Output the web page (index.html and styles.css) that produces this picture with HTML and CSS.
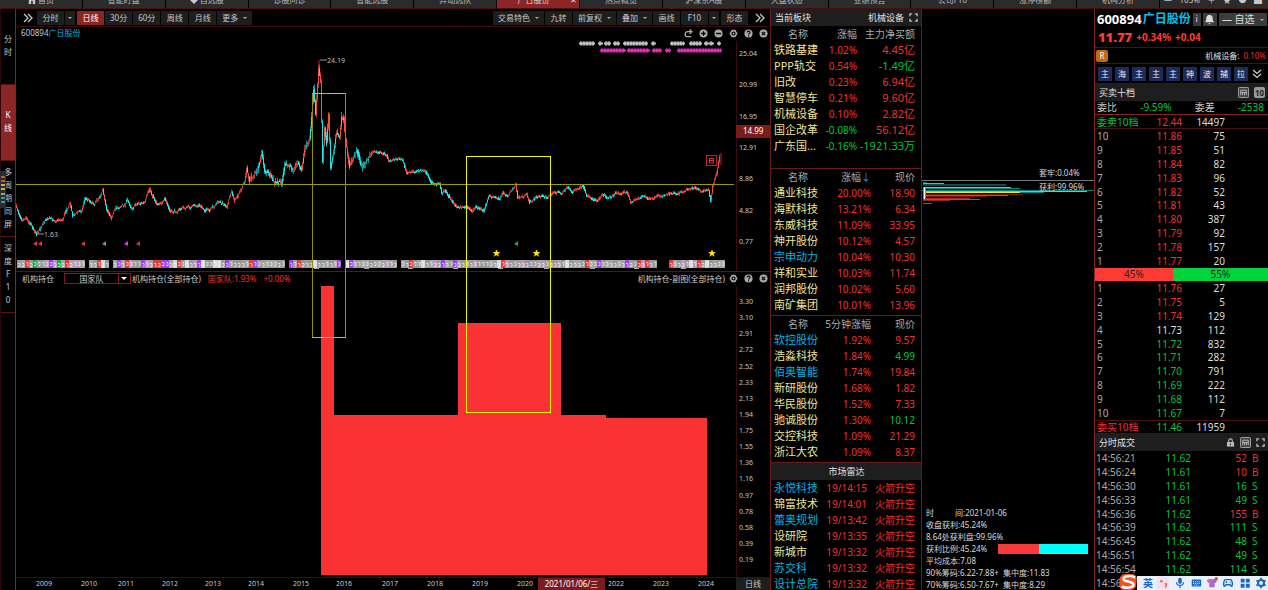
FILE: index.html
```html
<!DOCTYPE html>
<html lang="zh-CN">
  <head>
    <meta charset="UTF-8" />
    <meta name="viewport" content="width=device-width, initial-scale=1.0" />
    <title>广日股份 600894</title>
    <link rel="stylesheet" href="styles.css">
  </head>
  <body>
    <!-- shared icons -->
    <svg class="sprite" aria-hidden="true">
      <symbol id="i-more" viewBox="0 0 10 10"><path d="M1 1l4 4-4 4M5 1l4 4-4 4" fill="none" stroke="currentColor" stroke-width="1.3" /></symbol>
      <symbol id="i-redo" viewBox="0 0 10 10"><path d="M8 3H4a2.8 2.8 0 0 0 0 5.6h4M6.2.6L8.800 3 6.200 5.400" fill="none" stroke="currentColor" stroke-width="1.400" /></symbol>
      <symbol id="i-plus" viewBox="0 0 10 10"><circle cx="5" cy="5" r="4.500" fill="currentColor" /><path d="M5 2.500v5M2.500 5h5" stroke="#000" stroke-width="1.400" /></symbol>
      <symbol id="i-minus" viewBox="0 0 10 10"><circle cx="5" cy="5" r="4.500" fill="currentColor" /><path d="M2.200 5h5.600" stroke="#000" stroke-width="1.600" /></symbol>
      <symbol id="i-gear" viewBox="0 0 10 10"><path d="M3 .8h4L9.500 5 7 9.200H3L.5 5z" fill="currentColor" /><circle cx="5" cy="5" r="2.300" fill="#000" /><circle cx="5" cy="5" r="1" fill="currentColor" /></symbol>
      <symbol id="i-help" viewBox="0 0 10 10"><circle cx="5" cy="5" r="4.500" fill="currentColor" /><path d="M3.400 3.900c0-2 3.300-2 3.300 0C6.700 5 5 4.900 5 6.100M5 7v1.200" fill="none" stroke="#000" stroke-width="1.200" /></symbol>
      <symbol id="i-close" viewBox="0 0 10 10"><circle cx="5" cy="5" r="4.500" fill="currentColor" /><path d="M3.200 3.200l3.600 3.600M6.800 3.200L3.200 6.800" stroke="#000" stroke-width="1.300" /></symbol>
      <symbol id="i-full" viewBox="0 0 10 10"><path d="M1 3.500V1h2.500M6.500 1H9v2.500M9 6.500V9H6.500M3.500 9H1V6.500" fill="none" stroke="currentColor" stroke-width="1.500" /></symbol>
      <symbol id="i-page" viewBox="0 0 12 12"><rect x=".5" y=".5" width="11" height="11" rx="1" fill="#444" stroke="#aaa" /><path d="M3 9V3.500h6V9M3 6h6M5 9V6M7 9V6" fill="none" stroke="#bbb" /></symbol>
      <symbol id="i-lock" viewBox="0 0 10 10"><path d="M3 5V3a2 2 0 0 1 4 0v2" fill="none" stroke="currentColor" stroke-width="1.300" /><rect x="1" y="4.500" width="8" height="5" fill="currentColor" /><path d="M5 6v2" stroke="#222" /></symbol>
    </svg>

    <nav class="tabs">
      <a href="#"><svg viewBox="0 0 10 10"><path d="M0 5l5-5 5 5H9v5H6V6H4v4H1V5z" fill="#ccc" /></svg> 首页</a>
      <a href="#">智能盯盘</a>
      <a href="#"><svg viewBox="0 0 10 10"><path d="M5 10L0 5a3 3 0 0 1 5-4 3 3 0 0 1 5 4z" fill="#ccc" /></svg> 自选股</a>
      <a href="#">诊股问诊</a>
      <a href="#">智能选股</a>
      <a href="#">异动选队</a>
      <a href="#" class="active">广日股份<i>✕</i></a>
      <a href="#">热点概览</a>
      <a href="#">沪深京A股</a>
      <a href="#">大盘状态</a>
      <a href="#">业绩预告</a>
      <a href="#">公司F10</a>
      <a href="#">涨停榜额</a>
      <a href="#">机构分析</a>
      <div class="tab-tools"><span>—</span><span>105%</span><span>＋</span><span>★</span><span>●</span><span>▟</span></div>
    </nav>

    <div class="app">
      <aside class="side">
        <button>分<br>时</button>
        <button class="active">K<br>线</button>
        <button>多<br>周<br>期<br>同<br>屏</button>
        <button>深<br>度<br>F<br>1<br>0</button>
        <div class="meter"><i></i><i></i><i></i><i></i><i></i><i></i><i></i></div>
      </aside>

      <main class="chart">
        <div class="toolbar">
          <button class="icon-btn"><svg><use href="#i-more" /></svg></button>
          <div class="group">
            <button>分时</button><button class="drop"></button>
          </div>
          <button class="active">日线</button>
          <button>30分</button>
          <button>60分</button>
          <button>周线</button>
          <button>月线</button>
          <button class="with-drop">更多</button>
          <div class="spacer"></div>
          <button class="with-drop">交易特色</button>
          <button>九转</button>
          <button class="with-drop">前复权</button>
          <button class="with-drop">叠加</button>
          <button>画线</button>
          <div class="group">
            <button>F10</button><button class="drop"></button>
          </div>
          <button>形态</button>
          <button class="icon-btn"><svg><use href="#i-more" /></svg></button>
        </div>

        <div class="chart-head">
          <span>600894<b>广日股份</b></span>
          <div class="icons">
            <svg><use href="#i-redo" /></svg>
            <svg><use href="#i-plus" /></svg>
            <svg><use href="#i-minus" /></svg>
            <svg><use href="#i-gear" /></svg>
            <svg><use href="#i-help" /></svg>
            <svg><use href="#i-close" /></svg>
          </div>
        </div>

        <div class="chart-body">
          <div class="pane price">
            <svg id="price" viewBox="16 41 720 230" preserveAspectRatio="none"></svg>
            <div class="axis">
              <span>25.04</span><span>20.99</span><span>16.95</span><span>12.91</span><span>8.86</span><span>4.82</span><span>0.77</span>
              <b class="axis-tag">14.99</b>
            </div>
          </div>
          <div class="sub-head">
            <label for="holder">机构持仓</label>
            <div class="picker">
              <select id="holder"><option>国家队</option></select>
            </div>
            <span>机构持仓(全部持仓)</span>
            <span class="up">国家队:1.93%</span>
            <span class="up">+0.00%</span>
            <span class="sub-name">机构持仓-副图(全部持仓)</span>
            <div class="icons">
              <svg><use href="#i-gear" /></svg>
              <svg><use href="#i-help" /></svg>
              <svg><use href="#i-close" /></svg>
            </div>
          </div>
          <div class="pane holding">
            <svg viewBox="16 286 720 291" preserveAspectRatio="none">
              <path d="M321 575V286h13v129h124v-92h103v92h45v3h101v157z" fill="#f93333" />
            </svg>
            <div class="axis">
              <span>3.30</span><span>3.10</span><span>2.91</span><span>2.72</span><span>2.52</span><span>2.33</span><span>2.13</span><span>1.94</span><span>1.75</span><span>1.55</span><span>1.36</span><span>1.16</span><span>0.97</span><span>0.78</span><span>0.58</span><span>0.39</span><span>0.19</span>
            </div>
          </div>
          <svg class="drawings" viewBox="16 41 720 536" preserveAspectRatio="none">
            <path d="M16 184.500H734" stroke="#9a9a00" />
            <path d="M312.500 337.500V93.500h33V337.500z" fill="none" stroke="#8f8f00" />
            <path d="M312 93.500h34M312 337.500h34" stroke="#c8c800" />
            <rect x="466.500" y="156.500" width="84" height="256" fill="none" stroke="#f5f500" />
          </svg>
        </div>

        <div class="time-axis">
          <span>2009</span><span>2010</span><span>2011</span><span>2012</span><span>2013</span><span>2014</span><span>2015</span><span>2016</span><span>2017</span><span>2018</span><span>2019</span><span>2020</span><b>2021/01/06/三</b><span>2022</span><span>2023</span><span>2024</span>
          <button>日线</button>
        </div>
      </main>

      <section class="boards">
        <div class="bar"><span>当前板块</span><span class="right">机械设备</span><svg><use href="#i-full" /></svg></div>
        <table class="list list-board">
          <thead><tr><th>名称</th><th>涨幅</th><th>主力净买额</th></tr></thead>
          <tbody id="board"></tbody>
        </table>
        <table class="list">
          <thead><tr><th>名称</th><th>涨幅<i>↓</i></th><th>现价</th></tr></thead>
          <tbody id="gainers"></tbody>
        </table>
        <table class="list">
          <thead><tr><th>名称</th><th>5分钟涨幅</th><th>现价</th></tr></thead>
          <tbody id="movers"></tbody>
        </table>
        <div class="bar radar-title">市场雷达</div>
        <table class="list radar">
          <tbody id="radar"></tbody>
        </table>
      </section>

      <section class="chips">
        <svg class="chip-plot" viewBox="922 9 172 220" preserveAspectRatio="none" id="chips">
          <path d="M922 180.500H1094" stroke="#77777f" />
          <path d="M922 190.500H1094" stroke="#00807c" />
        </svg>
        <div class="chip-labels"><span>套牢:0.04%</span><span>获利:99.96%</span></div>
        <div class="chip-info">
          <p><span class="gap">时</span>间:2021-01-06</p>
          <p>收盘获利:45.24%</p>
          <p>8.64处获利盘:99.96%</p>
          <p class="ratio">获利比例:45.24%<i></i></p>
          <p>平均成本:7.08</p>
          <p>90%筹码:6.22-7.88+&nbsp; 集中度:11.83</p>
          <p>70%筹码:6.50-7.67+&nbsp; 集中度:8.29</p>
        </div>
      </section>

      <section class="quote">
        <div class="stock">
          <b>600894</b><b class="name">广日股份</b>
          <button class="info">i</button>
          <button class="bell"><svg viewBox="0 0 12 12"><path d="M6 1c-3 0-3.500 2-3.500 4S2 8 .8 9h10.400C10 8 9.500 7 9.500 5S9 1 6 1zM4.500 10h3L6 11.500z" fill="#ddd" /></svg></button>
          <button class="fav with-drop">— 自选</button>
        </div>
        <div class="last"><b>11.77</b><span>+0.34%</span><span>+0.04</span></div>
        <div class="industry"><i>R</i><span>机械设备:</span><em>0.10%</em></div>
        <div class="tags">
          <button>主</button><button>海</button><button>主</button><button>主</button><button>主</button><button>神</button><button>波</button><button>捕</button><button>拉</button>
          <svg viewBox="0 0 10 10"><path d="M1 1l4 3.500L9 1M1 5l4 3.500L9 5" fill="none" stroke="#ccc" stroke-width="1.300" /></svg>
        </div>
        <div class="bar"><span>买卖十档</span><svg class="page right"><use href="#i-page" /></svg><b class="ten">10</b></div>
        <div class="diff"><span>委比</span><em>-9.59%</em><span>委差</span><em>-2538</em></div>
        <table class="total"><tr><td class="down">委卖10档</td><td class="up">12.44</td><td>14497</td><td></td></tr></table>
        <table class="levels" id="asks"></table>
        <div class="ratio-bar"><span class="sell">45%</span><span class="buy">55%</span></div>
        <table class="levels" id="bids"></table>
        <table class="total buy-total"><tr><td class="up">委买10档</td><td class="down">11.46</td><td>11959</td><td></td></tr></table>
        <div class="bar"><span>分时成交</span><svg class="right"><use href="#i-lock" /></svg><svg class="page"><use href="#i-page" /></svg><svg><use href="#i-full" /></svg></div>
        <table class="trades" id="trades"></table>
      </section>
    </div>

    <div class="ime">
      <svg class="ime-logo" viewBox="0 0 20 16"><rect x="1" y="0" width="17" height="16" rx="5" fill="#f4511e" transform="skewX(-4)" /><path d="M16 3.500C11 1 4 2 4.500 5.200 5 8 14.500 7 14.500 10.500 14.500 14 7 14.500 2.500 12.500" fill="none" stroke="#fff" stroke-width="2.600" /></svg>
      <b>英</b>
      <svg viewBox="0 0 14 14"><rect width="14" height="14" fill="#f3dcf5" /><circle cx="5" cy="5" r="1.500" fill="#f57c00" /><path d="M9 8h2v2l-1.500 2" fill="none" stroke="#f4511e" stroke-width="1.500" /></svg>
      <svg viewBox="0 0 14 14"><rect x="5" y="1" width="4" height="7" rx="2" fill="#1467c8" /><path d="M3 6c0 5 8 5 8 0M7 10v3" fill="none" stroke="#1467c8" stroke-width="1.300" /></svg>
      <svg viewBox="0 0 14 14"><rect x="2" y="3" width="11" height="8" rx="1" fill="#1467c8" /><path d="M3.500 5.500h8M3.500 7.500h8M5 9.500h5" stroke="#fff" stroke-dasharray="1.200 1" /></svg>
      <svg viewBox="0 0 14 14"><path d="M1 4l3-2 3 1 3-1 3 2-2 3H10v5H4V7H3z" fill="#9b6bdc" /><path d="M1 4l3-2 3 1-3 9V7H3z" fill="#f0609a" /><circle cx="12" cy="2" r="2" fill="#f4511e" /></svg>
      <svg viewBox="0 0 14 14"><path d="M3 11c-2 0-1-8 1-8h6c2 0 3 8 1 8L9.500 9h-5z" fill="none" stroke="#1467c8" stroke-width="1.600" /><path d="M4 6h2.500M5.200 4.800v2.500M9 6h1.500" stroke="#1467c8" /></svg>
      <svg viewBox="0 0 14 14"><path d="M2 2h4.500v4.500H2zM8 2h4.500v4.500H8zM2 8h4.500v4.500H2zM8 8h4.500v4.500H8z" fill="#1467c8" /></svg>
      <svg viewBox="0 0 14 14"><circle cx="7" cy="7" r="3.500" fill="none" stroke="#1467c8" stroke-width="2.400" /><path d="M7 1v2M7 11v2M1.500 4l2 1M10.500 9l2 1M1.500 10l2-1M10.500 5l2-1" stroke="#1467c8" stroke-width="2" /></svg>
    </div>

    <script src="script.js"></script>
  </body>
</html>
```

FILE: styles.css
```css
* {
  box-sizing: border-box;
}
body {
  margin: 0;
  height: 100vh;
  overflow: hidden;
  display: flex;
  flex-direction: column;
  background: #000;
  color: #c8c8c8;
  font-family: "Noto Sans", "Noto Sans CJK SC", sans-serif;
  font-size: 8px;
  line-height: 12px;
}
button,
select {
  font: inherit;
  color: inherit;
  background: none;
  border: 0;
  padding: 0;
  margin: 0;
  cursor: pointer;
}
i,
em {
  font-style: normal;
}
p {
  margin: 0;
}
table {
  border-collapse: collapse;
  width: 100%;
  table-layout: fixed;
}
td,
th {
  padding: 0;
  font-weight: normal;
}
.sprite {
  display: none;
}
.up {
  color: #f0322d;
}
.down {
  color: #00c43a;
}
.right {
  margin-left: auto;
}

/* window tabs, the upper part is scrolled away */
.tabs {
  flex: none;
  display: flex;
  align-items: flex-end;
  height: 9px;
  overflow: hidden;
  background: #2b2b2b;
  border-bottom: 1px solid #4a1010;
}
.tabs a {
  flex: 1;
  height: 16px;
  line-height: 16px;
  text-align: center;
  color: #bbb;
  text-decoration: none;
  border-right: 1px solid #000;
}
.tabs a.active {
  background: #8c2626;
  color: #ddd;
}
.tabs a.active i {
  float: right;
  margin-right: 2px;
}
.tabs svg {
  width: 8px;
  height: 8px;
  vertical-align: -1px;
}
.tab-tools {
  width: 108px;
  height: 16px;
  line-height: 16px;
  display: flex;
  justify-content: space-between;
  padding: 0 6px 0 4px;
}

.app {
  flex: 1;
  min-height: 0;
  display: grid;
  grid-template-columns: 16px minmax(0, 1fr) 152px 172px 174px;
}

/* left strip */
.side {
  position: relative;
  border-left: 1px solid #2a0808;
  border-right: 1px solid #8a2222;
}
.side button {
  display: block;
  width: 100%;
  height: 76px;
  padding-bottom: 3px;
  line-height: 13px;
  border-bottom: 1px solid #5a1414;
}
.side .active {
  background: #8c2626;
  color: #fff;
}
.meter {
  position: absolute;
  left: -1px;
  top: 162px;
  width: 6px;
  height: 37px;
  padding: 5px 1px;
  background: #2c2c36;
  display: flex;
  flex-direction: column;
  justify-content: space-between;
}
.meter i {
  height: 2px;
  background: #c8b432;
}
.meter i:nth-child(-n + 2) {
  background: #c8563c;
}
.meter i:nth-child(n + 5) {
  background: #8cb450;
}
.meter i:nth-child(n + 6) {
  background: #2ca08c;
}

/* chart */
.chart {
  display: flex;
  flex-direction: column;
  min-height: 0;
}
.toolbar {
  flex: none;
  display: flex;
  align-items: center;
  gap: 1px;
  height: 18px;
  padding: 0 2px 0 4px;
  border-bottom: 1px solid #3a0c0c;
}
.toolbar button {
  height: 14px;
  min-width: 27px;
  padding: 0 5px;
  background: #1e1e1e;
  line-height: 14px;
}
.toolbar .active {
  background: #8c2626;
  color: #fff;
}
.toolbar .group {
  display: flex;
  gap: 1px;
  margin-right: 1px;
}
.toolbar .drop {
  min-width: 10px;
  padding: 0;
}
.toolbar .icon-btn {
  min-width: 16px;
  padding: 0;
  background: none;
}
.icon-btn svg {
  width: 10px;
  height: 10px;
  vertical-align: middle;
}
.toolbar .icon-btn:last-child {
  margin-left: 3px;
}
.spacer {
  flex: 1;
}
.drop::after,
.with-drop::after {
  content: "";
  display: inline-block;
  border: 2px solid transparent;
  border-top-color: #aaa;
  border-bottom: 0;
  vertical-align: middle;
}
.with-drop::after {
  margin-left: 5px;
}
.chart-head {
  flex: none;
  display: flex;
  align-items: center;
  justify-content: space-between;
  height: 14px;
  padding: 0 2px 2px 5px;
}
.chart-head b {
  color: #00b4d8;
  font-weight: normal;
}
.icons {
  display: flex;
  gap: 6px;
  color: #aaa;
}
.icons svg {
  width: 9px;
  height: 9px;
}
.chart-body {
  flex: 1;
  min-height: 0;
  position: relative;
  display: flex;
  flex-direction: column;
}
.pane {
  display: flex;
  min-height: 0;
}
.pane.price {
  flex: 230 1 0;
}
.pane.holding {
  flex: 291 1 0;
}
.pane > svg {
  flex: 1;
  min-width: 0;
  height: 100%;
}
.axis {
  position: relative;
  width: 34px;
  border-left: 1px solid #3a0c0c;
  padding-left: 2px;
  display: flex;
  flex-direction: column;
  justify-content: space-between;
  font-size: 7px;
}
.price .axis {
  padding-top: 7px;
  padding-bottom: 23px;
}
.holding .axis {
  padding-top: 10px;
  padding-bottom: 11px;
}
.axis-tag {
  position: absolute;
  left: -1px;
  right: 0;
  top: 84px;
  height: 13px;
  padding-left: 7px;
  background: #7a1c1c;
  color: #fff;
  font-size: 8px;
  font-weight: normal;
}
.sub-head {
  flex: none;
  display: flex;
  align-items: center;
  height: 15px;
  padding: 0 2px 1px 6px;
  border-top: 1px solid #5a1414;
}
.sub-head label {
  width: 42px;
}
.picker {
  position: relative;
  width: 67px;
  height: 11px;
  margin-right: 1px;
  border: 1px solid #8a1a1a;
}
.picker select {
  appearance: none;
  display: block;
  width: 54px;
  height: 9px;
  border-right: 1px solid #8a1a1a;
  text-align: center;
  text-align-last: center;
  line-height: 9px;
}
.picker::after {
  content: "";
  position: absolute;
  right: 3px;
  top: 3px;
  border: 3px solid transparent;
  border-top-color: #fff;
  border-bottom: 0;
}
.sub-head .up {
  margin-left: 7px;
}
.sub-name {
  margin-left: auto;
  margin-right: 4px;
}
.drawings {
  position: absolute;
  left: 0;
  top: 0;
  width: calc(100% - 34px);
  height: 100%;
  pointer-events: none;
}
.time-axis {
  flex: none;
  display: grid;
  grid-template-columns: 45fr 37fr 44fr 43fr 43fr 45fr 43fr 46fr 45fr 45fr 45fr 21fr 67fr 45fr 45fr 41fr 34px;
  height: 13px;
  padding-left: 20px;
  border-top: 1px solid #3a0c0c;
  font-size: 7px;
  white-space: nowrap;
}
.time-axis b {
  background: #7a1c1c;
  color: #fff;
  font-size: 8px;
  font-weight: normal;
  text-align: center;
}
.time-axis b + span,
.time-axis b + span ~ span {
  padding-left: 3px;
}
.time-axis button {
  background: #1e1e1e;
  font-size: 8px;
}

/* sector boards */
.boards {
  border-left: 1px solid #6a1a1a;
  border-right: 1px solid #6a1a1a;
  overflow: hidden;
}
.bar {
  display: flex;
  align-items: center;
  gap: 5px;
  height: 17px;
  padding: 0 3px 0 4px;
  background: #1e1e1e;
  color: #e0e0e0;
  font-size: 9px;
}
.bar svg {
  width: 9px;
  height: 9px;
  color: #bbb;
}
.bar .page {
  width: 11px;
  height: 11px;
}
.list {
  border-bottom: 1px solid #6a1a1a;
}
.list tr {
  height: 16px;
}
.list th {
  font-size: 10px;
  color: #aaa;
  text-align: right;
}
.list th i {
  color: #3a8cff;
}
.list th:first-child {
  width: 48px;
  text-align: center;
  padding-left: 6px;
}
.list th:last-child {
  width: 50px;
}
.list th:last-child,
.list td:last-child {
  padding-right: 6px;
}
.list td {
  font-size: 10px;
  text-align: right;
  white-space: nowrap;
}
.list td:first-child {
  padding-left: 3px;
  font-size: 11px;
  text-align: left;
  color: #f0e496;
}
.list td.own {
  color: #00b4e6;
}
.list tbody::after {
  content: "";
  display: block;
  height: 2px;
}
.list-board tbody::after {
  height: 14px;
}
.list-board th:last-child {
  width: 64px;
}
.list-board td:last-child {
  font-size: 11px;
}
.radar-title {
  justify-content: center;
}
.radar td:first-child {
  width: 48px;
}
.radar td:last-child {
  width: 54px;
}

/* chip distribution */
.chips {
  position: relative;
  display: flex;
  flex-direction: column;
  overflow: hidden;
  color: #d8d8d8;
}
.chip-plot {
  flex: none;
  width: 100%;
  height: 220px;
}
.chip-labels {
  position: absolute;
  left: 117px;
  top: 158px;
  display: flex;
  flex-direction: column;
  gap: 2px;
}
.chip-info {
  margin-top: auto;
  margin-bottom: -1px;
  padding-left: 4px;
  white-space: nowrap;
}
.chip-info .gap {
  display: inline-block;
  width: 29px;
}
.ratio {
  display: flex;
  align-items: center;
  justify-content: space-between;
  padding-right: 6px;
}
.ratio i {
  width: 90px;
  height: 10px;
  background: linear-gradient(90deg, #f93a3a 45.24%, #00ffff 0);
}

/* quote */
.quote {
  border-left: 1px solid #8a2222;
  overflow: hidden;
  white-space: nowrap;
}
.stock {
  display: flex;
  align-items: center;
  height: 20px;
  padding-left: 2px;
  gap: 1px;
  font-size: 13px;
  color: #fff;
}
.stock .name {
  color: #00c0f0;
  font-size: 12px;
}
.stock button {
  height: 13px;
  margin-left: 1px;
  background: #3c3c3c;
  color: #ddd;
  font-size: 9px;
}
.stock .info {
  width: 8px;
}
.stock .bell {
  width: 14px;
}
.bell svg {
  width: 11px;
  height: 11px;
  display: block;
  margin: auto;
}
.stock .fav {
  flex: 1;
  margin-right: 1px;
  font-size: 10px;
}
.last {
  display: flex;
  align-items: center;
  gap: 4px;
  height: 19px;
  padding: 0 3px 2px;
  font-size: 10px;
  font-weight: bold;
  color: #ff3a35;
  border-bottom: 1px solid #4a1010;
}
.last b {
  font-size: 13px;
}
.industry {
  display: flex;
  align-items: center;
  gap: 4px;
  height: 16px;
  padding: 0 2px 0 1px;
  border-bottom: 1px solid #4a1010;
  color: #e0e0e0;
}
.industry i {
  width: 12px;
  height: 12px;
  margin-right: auto;
  border-radius: 2px;
  background: #c06a10;
  color: #fff;
  text-align: center;
}
.industry em {
  color: #f0322d;
}
.tags {
  display: flex;
  align-items: center;
  gap: 3px;
  height: 20px;
  padding: 0 3px;
  border-bottom: 1px solid #4a1010;
}
.tags button {
  width: 14px;
  height: 14px;
  background: #1c2c5a;
  color: #e8e8e8;
}
.tags svg {
  width: 10px;
  height: 10px;
  margin-left: 1px;
}
.ten {
  width: 11px;
  height: 11px;
  border-radius: 2px;
  background: #999;
  color: #222;
  line-height: 11px;
  text-align: center;
  font-size: 8px;
}
.diff {
  display: flex;
  justify-content: space-between;
  height: 14px;
  padding: 0 4px 0 2px;
  font-size: 10px;
  border-bottom: 1px solid #8a2222;
}
.diff em {
  color: #00c43a;
}
.levels,
.total,
.trades {
  font-size: 10px;
  line-height: 12px;
  text-align: right;
  color: #ddd;
}
.total {
  height: 14px;
  border-bottom: 1px solid #4a1010;
}
.buy-total {
  border-top: 1px solid #4a1010;
}
.levels {
  height: 139px;
}
.levels td:first-child,
.total td:first-child {
  padding-left: 2px;
  text-align: left;
}
.levels td:first-child {
  color: #aaa;
}
.levels td:nth-child(2),
.total td:nth-child(2) {
  width: 42px;
}
.levels td:nth-child(3),
.total td:nth-child(3) {
  width: 43px;
}
.levels td:nth-child(4),
.total td:nth-child(4) {
  width: 43px;
}
.ratio-bar {
  display: flex;
  height: 13px;
  line-height: 13px;
  font-size: 10px;
  text-align: center;
  color: #222;
}
.ratio-bar .sell {
  width: 45%;
  background: #ff3b36;
}
.ratio-bar .buy {
  width: 55%;
  background: #00d43c;
}
.trades {
  height: 139px;
}
.trades td:first-child {
  padding-left: 1px;
  text-align: left;
  color: #aaa;
}
.trades td:nth-child(3) {
  width: 56px;
}
.trades td:last-child {
  width: 21px;
  text-align: left;
  padding-left: 5px;
}

/* input method bar */
.ime {
  position: fixed;
  right: 0;
  bottom: 0;
  width: 131px;
  height: 14px;
  display: flex;
  align-items: center;
  justify-content: space-between;
  padding: 0 1px 0 6px;
  background: #e8f0fc;
  color: #1467c8;
  font-size: 10px;
}
.ime svg {
  width: 12px;
  height: 12px;
}
.ime .ime-logo {
  position: absolute;
  left: -18px;
  bottom: 0;
  width: 20px;
  height: 16px;
}
```

FILE: script.js
```js
const board = [
  ["铁路基建", "1.02%", "4.45亿"],
  ["PPP轨交", "0.54%", "-1.49亿"],
  ["旧改", "0.23%", "6.94亿"],
  ["智慧停车", "0.21%", "9.60亿"],
  ["机械设备", "0.10%", "2.82亿"],
  ["国企改革", "-0.08%", "56.12亿"],
  ["广东国...", "-0.16%", "-1921.33万"],
];
const gainers = [
  ["通业科技", "20.00%", "18.90"],
  ["海默科技", "13.21%", "6.34"],
  ["东威科技", "11.09%", "33.95"],
  ["神开股份", "10.12%", "4.57"],
  ["宗申动力", "10.04%", "10.30", "own"],
  ["祥和实业", "10.03%", "11.74"],
  ["润邦股份", "10.02%", "5.60"],
  ["南矿集团", "10.01%", "13.96"],
];
const movers = [
  ["软控股份", "1.92%", "9.57", "own"],
  ["浩淼科技", "1.84%", "4.99", "", "down"],
  ["佰奥智能", "1.74%", "19.84", "own"],
  ["新研股份", "1.68%", "1.82"],
  ["华民股份", "1.52%", "7.33"],
  ["驰诚股份", "1.30%", "10.12", "", "down"],
  ["交控科技", "1.09%", "21.29"],
  ["浙江大农", "1.09%", "8.37"],
];
const radar = [
  ["永悦科技", "19/14:15", "火箭升空", "own"],
  ["锦富技术", "19/14:01", "火箭升空"],
  ["蕾奥规划", "19/13:42", "火箭升空", "own"],
  ["设研院", "19/13:35", "火箭升空"],
  ["新城市", "19/13:32", "火箭升空"],
  ["苏交科", "19/13:32", "火箭升空", "own"],
  ["设计总院", "19/13:32", "火箭升空", "own"],
];
const sign = (v) => (v.startsWith("-") ? "down" : "up");

function fillList(id, rows) {
  document.getElementById(id).innerHTML = rows
    .map(
      ([name, a, b, own = "", cls]) => `
        <tr>
          <td class="${own}">${name}</td>
          <td class="${sign(a)}">${a}</td>
          <td class="${cls || sign(b)}">${b}</td>
        </tr>`
    )
    .join("");
}
fillList("board", board);
fillList("gainers", gainers);
fillList("movers", movers);
fillList("radar", radar);

// order book
const askVolumes = [75, 51, 82, 96, 52, 43, 387, 92, 157, 20];
const bidVolumes = [27, 5, 129, 112, 832, 282, 791, 222, 112, 7];
document.getElementById("asks").innerHTML = askVolumes
  .map((v, i) => `<tr><td>${10 - i}</td><td class="up">${(11.86 - i / 100).toFixed(2)}</td><td>${v}</td><td></td></tr>`)
  .join("");
document.getElementById("bids").innerHTML = bidVolumes
  .map((v, i) => {
    const cls = i < 3 ? "up" : i > 3 ? "down" : "";
    return `<tr><td>${i + 1}</td><td class="${cls}">${(11.76 - i / 100).toFixed(2)}</td><td>${v}</td><td></td></tr>`;
  })
  .join("");

const trades = [
  ["14:56:21", "11.62", 52, "B"],
  ["14:56:24", "11.61", 10, "B"],
  ["14:56:30", "11.61", 16, "S"],
  ["14:56:33", "11.61", 49, "S"],
  ["14:56:36", "11.62", 155, "B"],
  ["14:56:39", "11.62", 111, "S"],
  ["14:56:45", "11.62", 48, "S"],
  ["14:56:51", "11.62", 49, "S"],
  ["14:56:54", "11.62", 114, "S"],
  ["14:56:57", "", "", ""],
];
document.getElementById("trades").innerHTML = trades
  .map(([t, p, v, s]) => {
    const cls = s === "B" ? "up" : "down";
    return `<tr><td>${t}</td><td class="down">${p}</td><td class="${cls}">${v}</td><td class="${cls}">${s}</td></tr>`;
  })
  .join("");

// price history: turning points, filled in with small candles
const points = [
  [16, 207], [22, 218], [26, 216], [37, 233], [45, 220], [63, 219], [67, 208], [70, 203], [73, 215], [82, 210],
  [85, 198], [95, 203], [103, 190], [107, 208], [112, 216], [117, 207], [125, 205], [127, 200], [132, 207],
  [138, 203], [145, 203], [150, 190], [157, 203], [165, 200], [171, 213], [183, 208], [200, 206], [210, 212],
  [218, 202], [227, 205], [232, 192], [235, 200], [245, 183], [247, 170], [250, 180], [258, 170], [262, 152],
  [265, 170], [269, 173], [274, 183], [282, 183], [285, 165], [293, 168], [298, 162], [302, 170], [305, 150],
  [310, 138], [312, 115], [314, 88], [316, 113], [319, 66], [321, 80], [323, 160], [325, 127], [327, 143],
  [329, 114], [331, 166], [337, 133], [340, 137], [342, 118], [344, 120], [346, 143], [350, 167], [357, 149],
  [362, 167], [367, 161], [373, 152], [387, 155], [389, 161], [403, 158], [407, 173], [425, 170], [432, 183],
  [440, 184], [442, 193], [445, 190], [457, 207], [467, 207], [472, 212], [476, 206], [484, 211], [489, 197],
  [497, 198], [500, 200], [503, 193], [508, 195], [516, 185], [518, 198], [527, 195], [530, 202], [539, 196],
  [548, 197], [555, 192], [562, 193], [567, 187], [573, 192], [583, 187], [587, 196], [598, 200], [603, 194],
  [608, 198], [618, 193], [627, 192], [631, 202], [643, 196], [651, 200], [672, 192], [678, 193], [692, 187],
  [700, 191], [709, 190], [711, 200], [713, 185], [717, 175], [720, 156],
];
let seed = 7;
function rand() {
  seed = (seed * 16807) % 2147483647;
  return seed / 2147483647;
}
function priceAt(x) {
  const i = Math.max(1, points.findIndex((p) => p[0] >= x));
  const [x0, y0] = points[i - 1];
  const [x1, y1] = points[i];
  return y0 + ((y1 - y0) * (x - x0)) / (x1 - x0);
}
let out = "";
let shift = 0;
for (let x = 16; x < 720; x++) {
  // drift keeps the line from looking ruled
  shift = shift * 0.6 + (rand() - 0.5) * (x < 373 ? 3 : 2);
  const a = priceAt(x) + shift;
  const b = priceAt(x + 1) + shift;
  const wild = x > 245 && x < 372 ? 4 : 1.5;
  const top = Math.min(a, b) - rand() * wild - 0.5;
  const bottom = Math.max(a, b) + rand() * wild + 0.5;
  const rising = x > 712 || rand() < (b < a ? 0.65 : 0.4);
  out += `<path d="M${x + 0.5} ${top}V${bottom}" stroke="${rising ? "#a83430" : "#0a9c9c"}"/>`;
  out += `<path d="M${x + 0.5} ${Math.round(a) - 0.5}V${Math.round(b) + 1}" stroke="${rising ? "#ff4c40" : "#22eaea"}"/>`;
}
out += `<path d="M319 60v8M721 153v12" stroke="#c22"/>`;

// highest and lowest marks
out += `<path d="M320 60h7M37 234h7" stroke="#999"/>`;
out += `<text x="327" y="63" fill="#bbb" font-size="7">24.19</text><text x="44" y="237" fill="#bbb" font-size="7">1.63</text>`;

// signal rows in the upper right corner
const dots = (list, y, color) =>
  list.map(([a, b]) => `<path d="M${a} ${y}H${b}" stroke="${color}" stroke-width="4" stroke-dasharray="2.500 .5"/><path d="M${a - 1} ${y}H${b + 1}" stroke="${color}" stroke-width="2"/>`).join("");
out += dots([[580, 594], [599, 602], [605, 610], [614, 619], [624, 647], [652, 655], [671, 684], [690, 701], [705, 708], [710, 713], [718, 720]], 43.5, "#bdbdbd");
out += dots([[601, 625], [628, 649], [653, 661], [666, 670], [678, 721]], 50.5, "#e32cb8");

// small flags
[[34, "#e33"], [39, "#e33"], [82, "#e33"], [103, "#97a"], [125, "#e3e"], [137, "#c33"], [515, "#1a5"]].forEach(([x, c]) => {
  out += `<path d="M${x - 1} 244l4-3v5z" fill="${c}"/>`;
});
[496.5, 536.5, 712].forEach((x) => {
  out += `<path d="M${x} 249.500l1.200 2.600h2.500l-2 1.800.8 2.800-2.500-1.600-2.500 1.600.8-2.800-2-1.800h2.500z" fill="#ffe100"/>`;
});

// event boxes
const gaps = [[85, 89], [109, 110], [287, 288], [341, 344], [397, 398], [656, 667]];
const boxColors = ["#999", "#a5a5a5", "#999", "#d8d8d8", "#a5a5a5", "#999", "#a0a0a0", "#a040f0", "#b9b", "#e33c38", "#10ad4c"];
for (let x = 17; x < 722; x += 4) {
  if (gaps.some(([a, b]) => x >= a - 2 && x < b)) continue;
  const early = x < 85 || (x > 110 && x < 140);
  const c = boxColors[Math.floor(early ? 4 + rand() * 7 : rand() * 10)];
  out += `<rect x="${x}" y="260" width="4" height="8" fill="${c}"/>`;
  out += `<path d="M${x + 1} ${262.5 + Math.floor(rand() * 2)}h2v3h${rand() < 0.5 ? -2 : -1}" fill="none" stroke="#fff" stroke-opacity=".6"/>`;
}
[316, 366, 410, 455, 500, 546, 592, 636, 683].forEach((x) => {
  out += `<path d="M${x - 2} 268.500h5" stroke="#aaa"/>`;
});

// day tag
out += `<rect x="706.500" y="155.500" width="10" height="10" fill="none" stroke="#b22"/><path d="M709.500 158.500h4v4.500h-4zM709.500 160.500h4" fill="none" stroke="#d33"/>`;
document.getElementById("price").innerHTML = out;

// chips: y, right end, colour
const chips = [
  [182.5, 927, "#066"], [183.5, 944, "#0dd"], [184.5, 1006, "#055"], [185.5, 1006, "#044"],
  [187.5, 1011, "#0ee"], [188.5, 1020, "#088"], [191.5, 1087, "#1ee"], [192.5, 1044, "#088"],
  [192.5, 1020, "#ee0"], [194.5, 1023, "#711"], [195.5, 1008, "#e33"], [196.5, 987, "#711"],
  [198.5, 970, "#a22"], [199.5, 980, "#e33"], [200.5, 950, "#922"], [203.5, 932, "#c33"], [205.5, 924, "#511"],
];
document.getElementById("chips").innerHTML +=
  chips.map(([y, x, c]) => `<path d="M923 ${y}H${x}" stroke="${c}"/>`).join("") +
  `<path d="M923.500 187v12M925.500 188v10" stroke="#f3f"/><path d="M924.500 187v12" stroke="#fff"/>`;
```
